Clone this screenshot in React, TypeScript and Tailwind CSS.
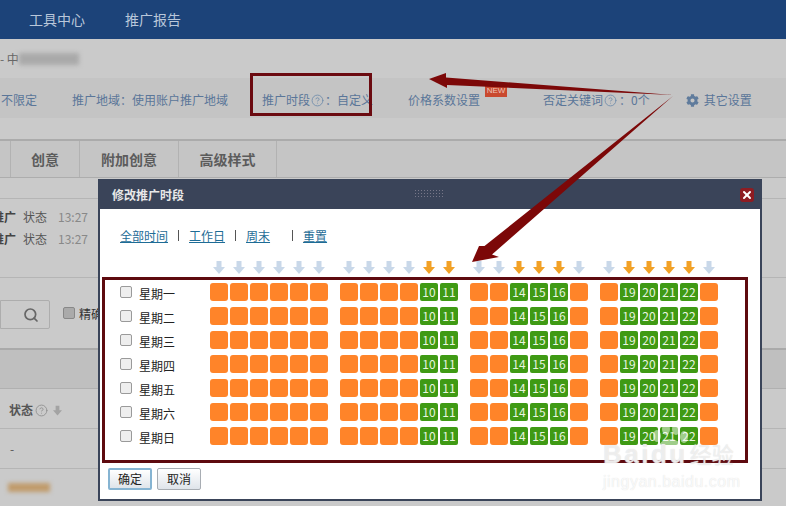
import React from 'react';
import { CircleHelp, Search, X } from 'lucide-react';
import { FaCog } from 'react-icons/fa';

const days = ['星期一', '星期二', '星期三', '星期四', '星期五', '星期六', '星期日'];
const activeHours = [10, 11, 14, 15, 16, 19, 20, 21, 22];
// hours are split into four blocks, each with its own left margin
const blocks = [
  { hours: [0, 1, 2, 3, 4, 5], ml: 'ml-0' },
  { hours: [6, 7, 8, 9, 10, 11], ml: 'ml-[12px]' },
  { hours: [12, 13, 14, 15, 16, 17], ml: 'ml-[12px]' },
  { hours: [18, 19, 20, 21, 22, 23], ml: 'ml-[12px]' },
];

const DownArrow: React.FC<{ active: boolean }> = ({ active }) => (
  <svg width="12" height="13" viewBox="0 0 12 13" className="block">
    <path d="M3.5 0h5v6H12L6 13 0 6h3.5z" fill={active ? '#f2a126' : '#c9d8e9'} />
  </svg>
);

const HourCell: React.FC<{ hour: number }> = ({ hour }) =>
  activeHours.includes(hour) ? (
    <div className="w-[18px] h-[18px] rounded-[2px] bg-[#3f9a14] text-[#e9f5e0] text-[12px] leading-[18px] text-center">{hour}</div>
  ) : (
    <div className="w-[18px] h-[18px] rounded-[3px] bg-[#ff8429]" />
  );

const Help: React.FC = () => <CircleHelp size={13} strokeWidth={1.6} className="text-[#6f8cab] shrink-0" />;

const Mosaic: React.FC<{ className: string }> = ({ className }) => <div className={`blur-[2px] ${className}`} />;

const Pipe: React.FC = () => <div className="ml-[10px] w-[1px] h-[11px] bg-[#555] shrink-0" />;

const Background: React.FC = () => (
  <div className="flex flex-col h-full bg-[#cacaca] text-[12px]">
    <div className="h-[39px] bg-[#1c4379] flex items-center pl-[29px] gap-[40px] text-[14px] text-[#b9c7da] shrink-0">
      <span>工具中心</span>
      <span>推广报告</span>
    </div>
    <div className="h-[39px] flex items-center text-[#666] shrink-0">
      <span>- 中</span>
      <Mosaic className="w-[60px] h-[12px] bg-[#a9a9a9]" />
    </div>
    <div className="h-[40px] bg-[#c4c4c4] flex items-center pt-[4px] text-[#5a7699] shrink-0">
      <span className="ml-[1px]">不限定</span>
      <span className="ml-[35px]">推广地域：使用账户推广地域</span>
      <span className="ml-[34px]">推广时段</span>
      <span className="ml-[1px]"><Help /></span>
      <span className="ml-[1px]">：自定义</span>
      <span className="ml-[35px] relative">
        价格系数设置
        <span className="absolute left-[77px] top-[-5px] w-[22px] h-[11px] bg-[#c9492f] text-[#eec4b8] text-[8px] leading-[10px] text-center font-['Liberation_Sans',sans-serif]">NEW</span>
      </span>
      <span className="ml-[63px]">否定关键词</span>
      <span className="ml-[1px]"><Help /></span>
      <span className="ml-[2px]">：0个</span>
      <FaCog size={13} className="ml-[36px] text-[#5f7b9c]" />
      <span className="ml-[5px]">其它设置</span>
    </div>
    <div className="h-[21px] border-b-2 border-[#ababab] shrink-0 box-content" />
    <div className="h-[37px] bg-[#c5c5c5] border-b border-[#adadad] flex text-[14px] font-bold text-[#5c5c5c] shrink-0">
      <div className="w-[11px] border-r border-[#b2b2b2]" />
      <div className="w-[69px] border-r border-[#b2b2b2] flex items-center justify-center">创意</div>
      <div className="w-[99px] border-r border-[#b2b2b2] flex items-center justify-center">附加创意</div>
      <div className="w-[98px] border-r border-[#b2b2b2] flex items-center justify-center">高级样式</div>
    </div>
    <div className="h-[21px] border-b border-[#b5b5b5] shrink-0" />
    <div className="h-[79px] border-b border-[#b5b5b5] pt-[9px] flex flex-col gap-[4px] shrink-0 overflow-hidden">
      {[0, 1].map((row) => (
        <div key={row} className="h-[18px] flex items-center text-[#555]">
          <span className="w-[16px] overflow-hidden whitespace-nowrap flex justify-end font-bold text-[#444]">推广</span>
          <span className="ml-[7px]">状态</span>
          <span className="ml-[11px] text-[#888]">13:27</span>
        </div>
      ))}
    </div>
    <div className="h-[72px] border-b-2 border-[#aaaaaa] pt-[22px] flex shrink-0">
      <div className="w-[50px] h-[29px] border border-[#adadad] rounded-r-[2px] flex items-center justify-end pr-[10px]">
        <Search size={16} strokeWidth={2.6} className="text-[#666]" />
      </div>
      <div className="ml-[13px] mt-[7px] w-[12px] h-[12px] border border-[#888] rounded-[2px] bg-[#aaa]" />
      <span className="ml-[4px] mt-[5px] text-[#333]">精确</span>
    </div>
    <div className="h-[39px] bg-[#bfbfbf] border-b border-[#b0b0b0] shrink-0" />
    <div className="h-[40px] border-b border-[#b5b5b5] flex items-center pl-[9px] pt-[3px] text-[#555] font-bold shrink-0 relative">
      <span>状态</span>
      <CircleHelp size={13} strokeWidth={1.6} className="ml-[2px] text-[#8f8f8f]" />
      <svg width="9" height="11" viewBox="0 0 12 13" className="ml-[5px]"><path d="M3.5 0h5v6H12L6 13 0 6h3.5z" fill="#a3a3a3" /></svg>
    </div>
    <div className="h-[40px] border-b border-[#b5b5b5] flex items-center pl-[10px] text-[#555] shrink-0">-</div>
    <div className="flex-1 flex items-center pl-[8px]">
      <Mosaic className="w-[42px] h-[9px] bg-[#c09b6b]" />
    </div>
  </div>
);

const Dialog: React.FC = () => (
  <div className="absolute left-[98px] top-[179px] w-[664px] h-[322px] bg-white border-2 border-t-0 border-[#3a4459] flex flex-col">
    <div className="h-[30px] -mx-[2px] bg-[#3a4459] flex items-center pl-[14px] pr-[8px] pt-[1px] shrink-0">
      <span className="text-[12px] font-bold text-[#e8e8e8]">修改推广时段</span>
      <svg width="28" height="9" className="ml-[231px]">
        <defs>
          <pattern id="grip" width="3" height="3" patternUnits="userSpaceOnUse"><rect width="1" height="1" fill="#778" /></pattern>
        </defs>
        <rect width="28" height="9" fill="url(#grip)" />
      </svg>
      <div className="ml-auto w-[14px] h-[14px] rounded-[3px] bg-[#8e1c22] flex items-center justify-center">
        <X size={12} strokeWidth={4} className="text-white" />
      </div>
    </div>
    <div className="h-[52px] flex items-center pl-[20px] pt-[1px] text-[12px] text-[#1e6c96] shrink-0">
      <span className="underline">全部时间</span>
      <Pipe />
      <span className="ml-[10px] underline">工作日</span>
      <Pipe />
      <span className="ml-[10px] underline">周末</span>
      <div className="ml-[12px]"><Pipe /></div>
      <span className="ml-[10px] underline">重置</span>
    </div>
    <div className="h-[16px] pl-[110px] flex shrink-0">
      {blocks.map((block, i) => (
        <div key={i} className={`flex gap-[8px] ${block.ml} pl-[3px] pr-[3px]`}>
          {block.hours.map((h) => (
            <DownArrow key={h} active={activeHours.includes(h)} />
          ))}
        </div>
      ))}
    </div>
    <div className="mx-[2px] h-[186px] w-[646px] border-[3px] border-[#5e0a0f] pt-[3px] flex flex-col gap-[6px] shrink-0">
      {days.map((day) => (
        <div key={day} className="h-[18px] flex items-center">
          <div className="ml-[15px] w-[12px] h-[12px] border border-[#9a9a9a] rounded-[2px] bg-[#eeeeee] shrink-0 -mt-[1px]" />
          <span className="ml-[7px] w-[71px] pt-[4px] text-[12px] leading-[18px] text-[#222] shrink-0">{day}</span>
          {blocks.map((block, i) => (
            <div key={i} className={`flex gap-[2px] ${block.ml}`}>
              {block.hours.map((h) => (
                <HourCell key={h} hour={h} />
              ))}
            </div>
          ))}
        </div>
      ))}
    </div>
    <div className="flex gap-[5px] pl-[8px] pt-[5px]">
      <button className="w-[44px] h-[22px] rounded-[2px] border-2 border-[#86b4d2] bg-[linear-gradient(#ffffff,#dfe4ea)] text-[12px] text-[#222]">确定</button>
      <button className="w-[44px] h-[22px] rounded-[2px] border border-[#a8adb3] bg-[linear-gradient(#ffffff,#dfe4ea)] text-[12px] text-[#222]">取消</button>
    </div>
  </div>
);

const Annotations: React.FC = () => (
  <>
    <div className="absolute left-[250px] top-[73px] w-[122px] h-[43px] border-[3px] border-[#6b0a10]" />
    <svg width="786" height="506" className="absolute inset-0">
      <path d="M429 79 L446 73 L446 77.5 L673 95 L447 85 L447 88 Z" fill="#7c0808" />
      <path d="M673 96 L492 254.5 L499 257 L472 262 L479 246 L484.5 246 Z" fill="#7c0808" />
    </svg>
  </>
);

const Watermark: React.FC = () => (
  <div className="absolute left-[603px] top-[423px] w-[140px] h-[68px] font-['Liberation_Sans',sans-serif]">
    <svg width="42" height="32" viewBox="0 0 42 32" className="absolute left-[46px] top-0" fill="#ffffff" fillOpacity="0.5">
      <ellipse cx="8" cy="13" rx="4" ry="6" />
      <ellipse cx="17" cy="6" rx="4" ry="6" />
      <ellipse cx="27" cy="6" rx="4" ry="6" />
      <ellipse cx="35" cy="14" rx="4" ry="6" />
      <ellipse cx="21" cy="24" rx="11" ry="8" />
    </svg>
    <div className="absolute left-0 top-[16px] text-[26px] leading-[28px] font-bold tracking-[2.5px] whitespace-nowrap text-white/60 [text-shadow:0_0_1px_#d4d4d4]">
      Baidu<span className="ml-[2px] tracking-normal font-['Noto_Sans_CJK_SC',sans-serif] font-normal text-[22px]">经验</span>
    </div>
    <div className="absolute left-0 top-[50px] text-[16px] leading-[18px] tracking-[0.5px] whitespace-nowrap text-white/80 [text-shadow:0_0_1px_#d8d8d8]">jingyan.baidu.com</div>
  </div>
);

export default function App() {
  return (
    <div className="relative w-[786px] h-[506px] overflow-hidden font-['Noto_Sans_CJK_SC',sans-serif]">
      <Background />
      <Dialog />
      <Annotations />
      <Watermark />
    </div>
  );
}
